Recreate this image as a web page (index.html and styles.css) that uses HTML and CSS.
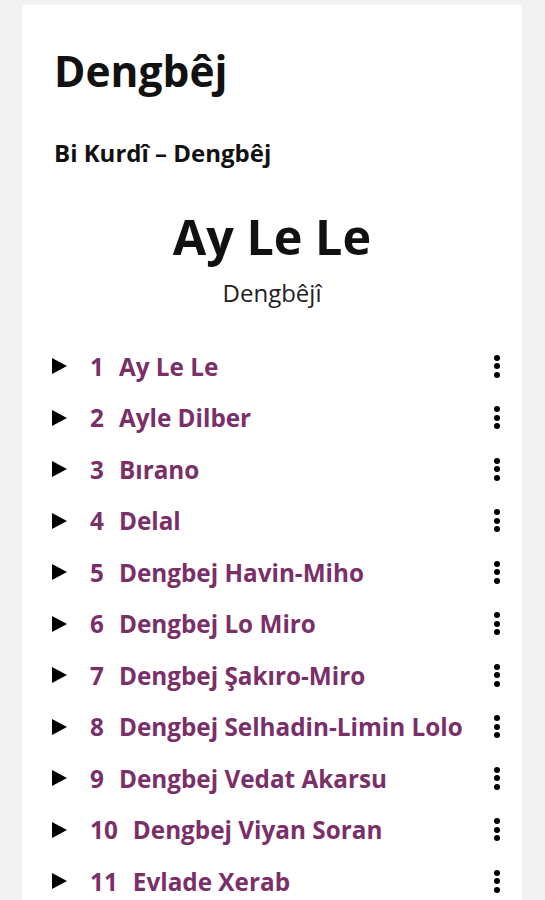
FILE: index.html
```html
<!DOCTYPE html>
<html>
<head>
    <title>Dengbêj</title>
    <link rel="stylesheet" href="styles.css">
</head>
<body>
    <div class="card">
        <h1 class="site-title">Dengbêj</h1>
        <div class="crumbs">Bi Kurdî – Dengbêj</div>

        <div class="album">
            <h2 class="album-title">Ay Le Le</h2>
            <div class="album-artist">Dengbêjî</div>
        </div>

        <ul class="tracks">
            <li class="track"><span class="play"></span><span class="num">1</span><span class="name">Ay Le Le</span><span class="more"><i></i><i></i><i></i></span></li>
            <li class="track"><span class="play"></span><span class="num">2</span><span class="name">Ayle Dilber</span><span class="more"><i></i><i></i><i></i></span></li>
            <li class="track"><span class="play"></span><span class="num">3</span><span class="name">Bırano</span><span class="more"><i></i><i></i><i></i></span></li>
            <li class="track"><span class="play"></span><span class="num">4</span><span class="name">Delal</span><span class="more"><i></i><i></i><i></i></span></li>
            <li class="track"><span class="play"></span><span class="num">5</span><span class="name">Dengbej Havin-Miho</span><span class="more"><i></i><i></i><i></i></span></li>
            <li class="track"><span class="play"></span><span class="num">6</span><span class="name">Dengbej Lo Miro</span><span class="more"><i></i><i></i><i></i></span></li>
            <li class="track"><span class="play"></span><span class="num">7</span><span class="name">Dengbej Şakıro-Miro</span><span class="more"><i></i><i></i><i></i></span></li>
            <li class="track"><span class="play"></span><span class="num">8</span><span class="name">Dengbej Selhadin-Limin Lolo</span><span class="more"><i></i><i></i><i></i></span></li>
            <li class="track"><span class="play"></span><span class="num">9</span><span class="name">Dengbej Vedat Akarsu</span><span class="more"><i></i><i></i><i></i></span></li>
            <li class="track"><span class="play"></span><span class="num">10</span><span class="name">Dengbej Viyan Soran</span><span class="more"><i></i><i></i><i></i></span></li>
            <li class="track"><span class="play"></span><span class="num">11</span><span class="name">Evlade Xerab</span><span class="more"><i></i><i></i><i></i></span></li>
        </ul>
    </div>
</body>
</html>
```

FILE: styles.css
```css
body {
    margin: 0;
    background: #f1f1f1;
    font-family: 'Open Sans', sans-serif;
    color: #111;
}
.card {
    background: #fff;
    margin: 5px 23px 0 22px;
    padding: 30px 22px 20px 30px;
    min-height: 900px;
}
.site-title {
    font-size: 42.5px;
    font-weight: 700;
    line-height: 1.3;
    margin: 8px 0 0 2px;
}
.crumbs {
    font-size: 24px;
    font-weight: 700;
    margin: 38px 0 0 2px;
}
.album {
    text-align: center;
    margin: 38px 8px 0 0;
}
.album-title {
    font-size: 48.5px;
    font-weight: 700;
    line-height: 1.2;
    margin: 0;
}
.album-artist {
    font-size: 24px;
    font-weight: 400;
    color: #222;
    margin-top: 11px;
}
.tracks {
    list-style: none;
    margin: 31px 0 0 0;
    padding: 0;
}
.track {
    display: flex;
    align-items: center;
    height: 51.5px;
    font-size: 24.3px;
    font-weight: 700;
    color: #7a2f69;
}
.play {
    width: 0;
    height: 0;
    border-top: 8.5px solid transparent;
    border-bottom: 8.5px solid transparent;
    border-left: 15px solid #000;
    margin-right: 23px;
}
.num {
    margin-right: 15px;
}
.name {
    flex: 1;
}
.more {
    display: flex;
    flex-direction: column;
    gap: 2.5px;
}
.more i {
    display: block;
    width: 6px;
    height: 6px;
    border-radius: 50%;
    background: #000;
}
```
